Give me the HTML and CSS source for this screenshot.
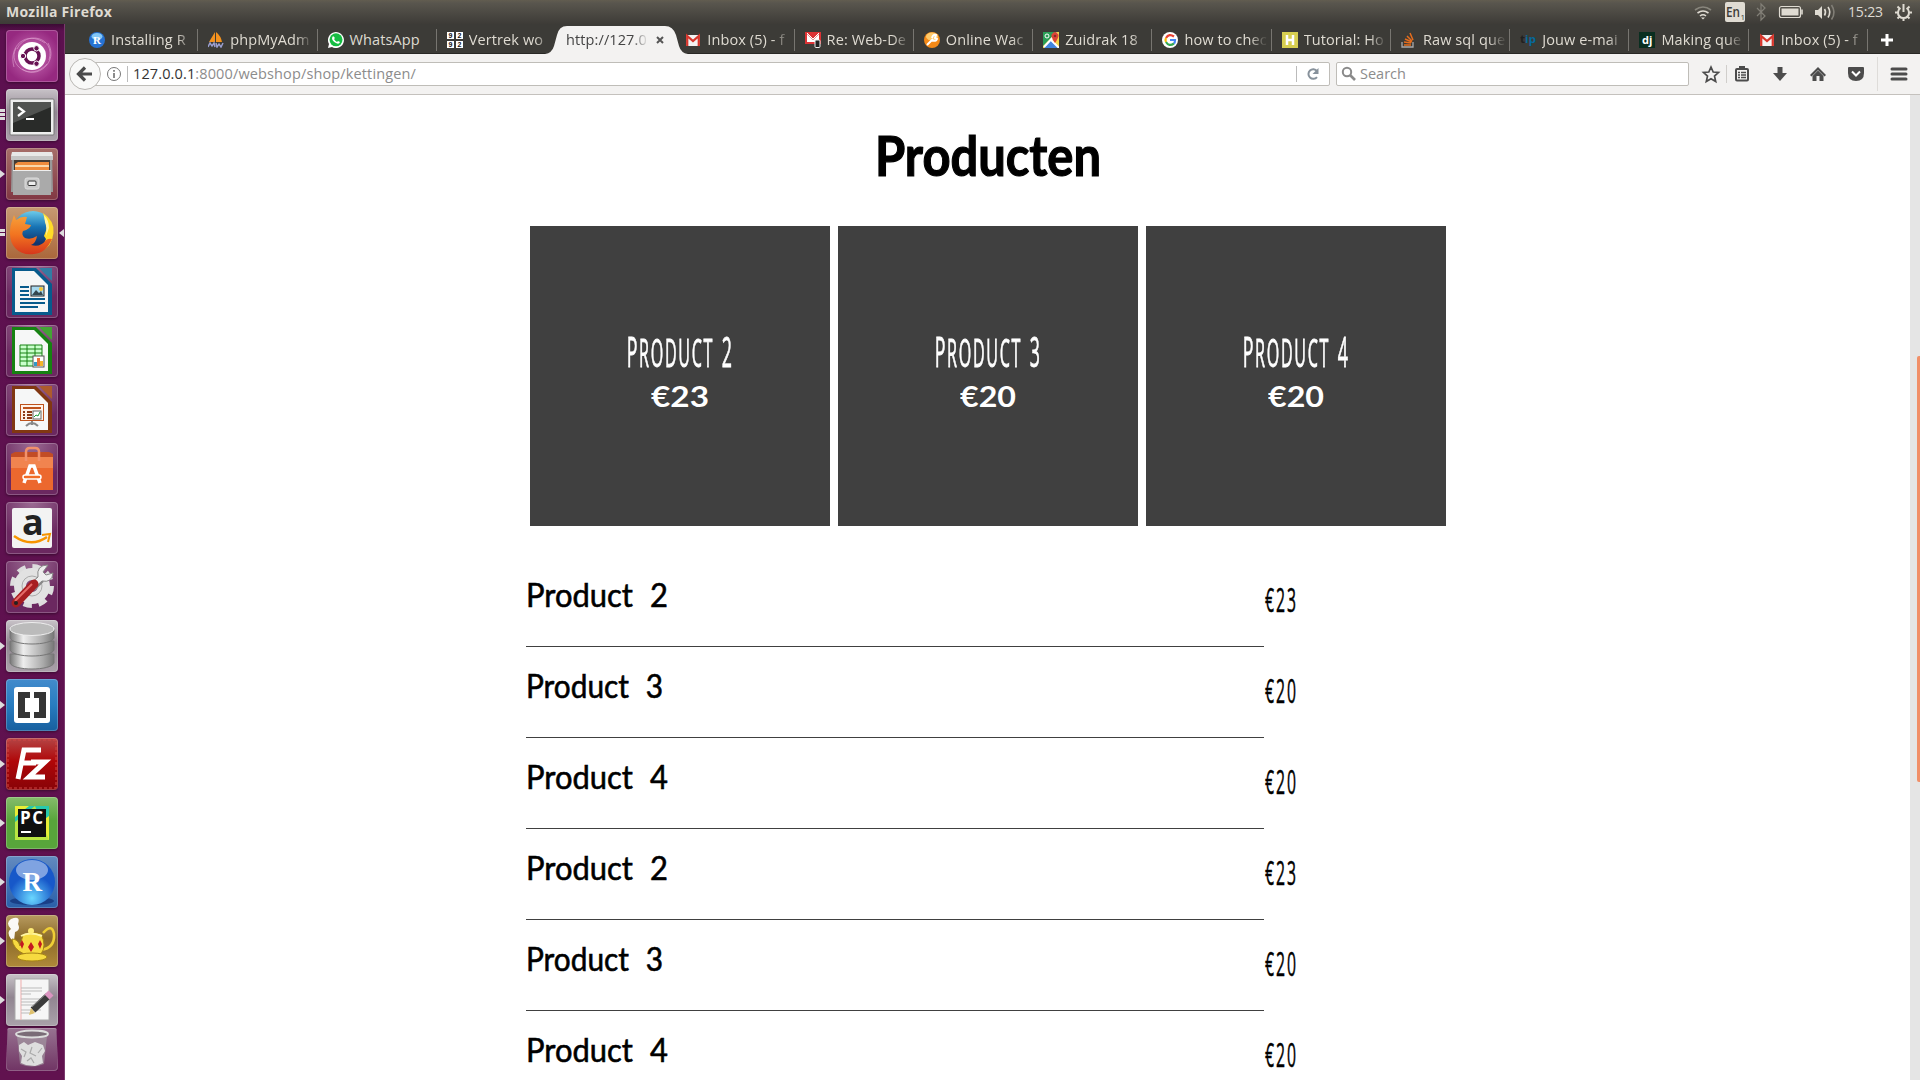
FILE: index.html
```html
<!DOCTYPE html>
<html lang="nl">
<head>
<meta charset="utf-8">
<title>Producten</title>
<link rel="stylesheet" href="styles.css">
</head>
<body>
<header class="panel">
  <span class="panel-title">Mozilla Firefox</span>
  <svg class="indicators" width="240" height="24" viewBox="1680 0 240 24" fill="none" stroke="#dfdbd2" stroke-width="1.6">
    <path d="M1695 10q8-6 16 0" stroke="#88857c"/><path d="M1697.500 13q5.500-4 11 0M1700 16q3-2.500 6 0"/><path d="M1701 17.500l2 2 2-2z" fill="#dfdbd2" stroke="none"/>
    <rect x="1725" y="2" width="20" height="20" rx="2" fill="#dfdbd2" stroke="none"/>
    <text x="1726" y="17" class="lang" textLength="14" lengthAdjust="spacingAndGlyphs">En</text><text x="1740.500" y="20" class="lang-sub">1</text>
    <path d="M1757 8l8 8-4 4V4l4 4-8 8" stroke="#827f77" stroke-width="1.200"/>
    <rect x="1779.500" y="6.500" width="21" height="11" rx="2" stroke-width="1.200"/><rect x="1781.500" y="8.500" width="17" height="7" fill="#dfdbd2" stroke="none"/><path d="M1802 9.500v5"/>
    <path d="M1815 10h3l4-4v13l-4-4h-3z" fill="#dfdbd2" stroke="none"/><path d="M1824.500 9q2 3 0 6.500M1828 7q3.500 5 0 10.500"/><path d="M1831.500 5q5 7.500 0 14.500" stroke="#827f77"/>
    <text x="1848" y="17" class="clock" textLength="35">15:23</text>
    <path d="M1900.500 8a5.500 5.500 0 1 0 6 0M1903.500 4v8M1903.500 18v3M1895 12.500h3M1909 12.500h3M1897.500 6.500l2 2M1909.500 6.500l-2 2M1897.500 18.500l2-2M1909.500 18.500l-2-2" stroke-width="2"/>
  </svg>
</header>
<div class="desktop">
  <nav class="launcher">
    <div class="tile ubuntu"><svg viewBox="0 0 52 52"><g fill="none" stroke="#e2a5d3" stroke-opacity=".6"><path d="M8 37C2 16 20 0 39 13M11 19C20 0 50 7 43 30M42 13C53 32 31 50 16 39M41 34C25 52 1 36 10 18"/></g><circle cx="26" cy="26" r="14" fill="#fff"/><circle cx="26" cy="26" r="7" fill="none" stroke="#671253" stroke-width="3.500"/><g fill="#671253" stroke="#fff" stroke-width="1"><circle cx="17" cy="26" r="2.700"/><circle cx="30.500" cy="18.300" r="2.700"/><circle cx="30.500" cy="33.700" r="2.700"/></g></svg></div>
    <div class="tile silver run many"><svg viewBox="0 0 52 52"><rect x="4" y="10" width="44" height="36" rx="1" fill="#eee" stroke="#777"/><rect x="7" y="13" width="38" height="30" fill="#292b29"/><path d="M7 13h38v5L7 34z" fill="#515351"/><path d="M12 18l6 4.500-6 4.500M20 30h8" fill="none" stroke="#fff" stroke-width="2.200"/></svg></div>
    <div class="tile files run"><svg viewBox="0 0 52 52"><path d="M6 4h40l1 40H5z" fill="#999"/><path d="M6 4h40l1 4H5z" fill="#e8e8e8"/><path d="M5 8h42v4H5z" fill="#c5c5c5"/><rect x="8" y="12" width="36" height="12" fill="#443b35"/><path d="M9 16l3-2h31v9H9z" fill="#f08b3c"/><path d="M9 18h34" stroke="#fff0d0" stroke-width="1.500"/><path d="M7 22h38v25H7z" fill="#aaa"/><path d="M7 22.500h38" stroke="#eee"/><rect x="19" y="30" width="14" height="11" rx="2" fill="#c9c9c9" stroke="#ddd"/><rect x="22" y="33" width="8" height="4.500" rx="1" fill="#eee" stroke="#333"/></svg></div>
    <div class="tile firefox run two focused"><svg viewBox="0 0 52 52"><defs><linearGradient id="globe" x2="0" y2="1"><stop stop-color="#6ccbea"/><stop offset=".4" stop-color="#1673b4"/><stop offset=".8" stop-color="#11356d"/></linearGradient><linearGradient id="fox" x2="0" y2="1"><stop stop-color="#f7a13a"/><stop offset=".5" stop-color="#f27420"/><stop offset="1" stop-color="#d6371c"/></linearGradient></defs><circle cx="27" cy="24" r="20" fill="url(#globe)"/><path d="M37 6q12 8 10.500 20Q46 40 35 44l5-12-2-3 3-8z" fill="#ffdc27"/><path d="M38 8q5 5 5 13l-3 8q1-9-1-14z" fill="#fff4a4"/><path d="M6 14l2-6 2 5q5-4 11-3l-2 7 6 1q-1 4-8 6-2 4 2 7 6 2 12-2-1 7-6 9 9 3 15-5 3-2 6-1-6 14-18 15C14 49 4 40 4 27Q4 18 6 14z" fill="url(#fox)"/></svg></div>
    <div class="tile office"><svg viewBox="0 0 52 52"><path d="M6 2h24l16 16v31H6z" fill="#075b8c"/><path d="M33 2h13v13z" fill="#327ca3"/><path d="M9 5h19l14 14v27H9z" fill="#f6f7f7"/><path d="M14 21h9M14 25h9M14 29h9M14 33h25M14 37h25M14 41h18" stroke="#075b8c" stroke-width="2"/><rect x="25" y="20" width="13" height="10" fill="#a8d9ee" stroke="#222"/><path d="M26 29l4-5 3 3 2-2 2 4z" fill="#33464f"/><circle cx="35" cy="23" r="2" fill="#f6c632"/></svg></div>
    <div class="tile office"><svg viewBox="0 0 52 52"><path d="M6 2h24l16 16v31H6z" fill="#168212"/><path d="M33 2h13v13z" fill="#43a334"/><path d="M9 5h19l14 14v27H9z" fill="#f6f7f7"/><path d="M14 20h22v21H14z" fill="#caffcc"/><path d="M14 20h22v21H14zM14 24h22M14 28h22M14 32h22M14 36h22M21 20v21M29 20v21" fill="none" stroke="#168212"/><rect x="27" y="31" width="11" height="11" fill="#fff" stroke="#555"/><path d="M28 37h3v4h-3z" fill="#3297c7"/><path d="M31 33h3v8h-3z" fill="#ed7138"/><path d="M34 36h3v5h-3z" fill="#f3b52a"/></svg></div>
    <div class="tile office"><svg viewBox="0 0 52 52"><path d="M6 2h24l16 16v31H6z" fill="#813712"/><path d="M33 2h13v13z" fill="#ad5b2d"/><path d="M9 5h19l14 14v27H9z" fill="#f6f7f7"/><rect x="14.500" y="20.500" width="23" height="16" fill="#fff2e9" stroke="#be521c"/><path d="M17 24h18" stroke="#be521c" stroke-width="2"/><path d="M17 28h2M17 31h2M17 34h2M21 28h5M21 31h5M21 34h5" stroke="#8d3a16" stroke-width="2"/><rect x="27" y="27" width="8" height="8" fill="#fff" stroke="#666"/><path d="M28 33l2-2 2 1 2-4" fill="none" stroke="#199b39"/><path d="M20 42q6-6 12 0M26 37v4" fill="none" stroke="#888" stroke-width="2"/></svg></div>
    <div class="tile office"><svg viewBox="0 0 52 52"><path d="M5 11h42v36H5z" fill="#ec682e"/><path d="M5 11l4-2h34l4 2v5H5z" fill="#c24c25"/><path d="M5 14h42v11H5z" fill="#f1844f"/><path d="M20 18V9q0-4 4-4h5q4 0 4 4v9" fill="none" stroke="#f1916c" stroke-width="2.500"/><path d="M18 40l6-17h4l6 17" fill="none" stroke="#fff" stroke-width="3.500"/><rect x="17" y="32" width="18" height="4" rx="2" fill="#f26c27" stroke="#fff" stroke-width="1.500"/></svg></div>
    <div class="tile office"><svg viewBox="0 0 52 52"><rect x="6" y="6" width="40" height="40" rx="2" fill="#f3f3f3"/><text x="16" y="33" class="amazon-a">a</text><path d="M8 34Q25 46 41 35" fill="none" stroke="#f79400" stroke-width="2.500"/><path d="M36 33l8-1-2 8" fill="none" stroke="#f79400" stroke-width="2"/></svg></div>
    <div class="tile office"><svg viewBox="0 0 52 52"><circle cx="26" cy="25" r="18.500" fill="none" stroke="#ddd" stroke-width="7" stroke-dasharray="8 6.500"/><circle cx="26" cy="25" r="12" fill="none" stroke="#e2e2e2" stroke-width="12"/><circle cx="26" cy="25" r="10" fill="none" stroke="#aaa"/><path d="M26 27l9-9" stroke="#888" stroke-width="8"/><path d="M27 28l9-8q10 2 11-8l-7 2-3-3 5-7q-12 0-10 12l-8 7z" fill="#eee" stroke="#888"/><path d="M10 42l18-19" stroke="#a71e21" stroke-width="9" stroke-linecap="round"/><path d="M9 40l17-17" stroke="#e66b68" stroke-width="2"/><circle cx="10" cy="42" r="2" fill="#222"/></svg></div>
    <div class="tile silver run"><svg viewBox="0 0 52 52"><defs><linearGradient id="steel"><stop stop-color="#777"/><stop offset=".3" stop-color="#eee"/><stop offset=".75" stop-color="#aaa"/><stop offset="1" stop-color="#777"/></linearGradient></defs><path d="M4 34v9c3 8 41 8 44 0v-9z" fill="url(#steel)" stroke="#777"/><path d="M4 21v9c3 8 41 8 44 0v-9z" fill="url(#steel)" stroke="#777"/><path d="M4 9v9c3 8 41 8 44 0V9z" fill="url(#steel)" stroke="#777"/><ellipse cx="26" cy="9" rx="22" ry="6.500" fill="#bbb" stroke="#eee"/></svg></div>
    <div class="tile blue run"><svg viewBox="0 0 52 52"><rect x="8" y="8" width="36" height="36" rx="3" fill="#fff"/><path d="M12 13h12v6h-5v14h5v6H12zM40 13H28v6h5v14h-5v6h12z" fill="#353535"/></svg></div>
    <div class="tile red run"><svg viewBox="0 0 52 52"><rect x="2" y="2" width="48" height="48" fill="none" stroke="#d14443" stroke-dasharray="3 2"/><path d="M12 41l6-29h17M15 25h15M25 24h14L23 39h16" fill="none" stroke="#fff" stroke-width="5"/></svg></div>
    <div class="tile green run"><svg viewBox="0 0 52 52"><path d="M9 9h34v34H9z" fill="#e9ee35"/><path d="M9 43V20L23 9h20v10z" fill="#27c9ad"/><path d="M9 43V25l20-16 14 34z" fill="#b9e642"/><rect x="12" y="12" width="28" height="28" fill="#101010"/><text x="14" y="27" class="pc-text" textLength="23">PC</text><path d="M15 35h10" stroke="#fff" stroke-width="2"/></svg></div>
    <div class="tile rstudio run"><svg viewBox="0 0 52 52"><defs><radialGradient id="orb" cy=".85"><stop stop-color="#6ad7ff"/><stop offset="1" stop-color="#1758c9"/></radialGradient></defs><ellipse cx="26" cy="45" rx="22" ry="4" fill="#193f87"/><circle cx="26" cy="26" r="23" fill="url(#orb)"/><ellipse cx="26" cy="14" rx="16" ry="10" fill="#fff" opacity=".45"/><text x="16.500" y="35" class="r-text">R</text></svg></div>
    <div class="tile gold run"><svg viewBox="0 0 52 52"><path d="M5 24Q0 17 5 14-1 8 5 4q10-4 7 5 3 6-3 8l-1 9z" fill="#fff" opacity=".95"/><path d="M37 18q9-10 11 1 1 14-13 16" fill="none" stroke="#efce35" stroke-width="2.500"/><path d="M6 24q6 0 8 7l3-11q8-4 18-1 6 12 0 20H18Q7 34 6 24z" fill="#f6da40" stroke="#a78515"/><ellipse cx="26" cy="42" rx="15" ry="4" fill="#f6da40" stroke="#a78515"/><path d="M15 21q9-5 21 0" stroke="#fff6a4" stroke-width="2" fill="none"/><circle cx="25" cy="16" r="3" fill="#ffed77"/><path d="M16 25l2 4-2 5-2-5zM25 27l3 5-3 5-3-5zM34 25l2 4-2 5-2-5z" fill="#c51921"/></svg></div>
    <div class="tile silver run"><svg viewBox="0 0 52 52"><rect x="9" y="5" width="34" height="41" fill="#f6f6f6" stroke="#aaa"/><path d="M15 5v41" stroke="#efadad"/><path d="M15 14h21M15 17h21M15 20h10M15 25h21M15 28h21M15 31h15M15 36h20M15 39h12" stroke="#bbb"/><path d="M27 36l15-14" stroke="#3b3b3b" stroke-width="7"/><path d="M26 33l15-14" stroke="#888"/><path d="M23 41l6-2-4-5z" fill="#dec06c"/><path d="M41 23l4-4" stroke="#da94c0" stroke-width="7"/></svg></div>
    <div class="tile trash"><svg viewBox="0 0 52 43"><path d="M11 8l3 28q12 5 24 0l3-28z" fill="#a49ba3" opacity=".65"/><path d="M13 17l5-3 4 3 7-3 8 3 2 6-3 5 1 7-8 3-9-1-5-2 1-7-3-5z" fill="#dedede"/><path d="M15 21l5 3-2 5M26 19l-2 6 6 3M36 20l-4 5M21 33l4-3 3 5" fill="none" stroke="#aaa" stroke-width="1.200"/><ellipse cx="26" cy="6" rx="16" ry="3.500" fill="#7a6c77" stroke="#ddd" stroke-width="1.800"/></svg></div>
  </nav>
  <section class="browser">
    <div class="tabs">
      <div class="tab"><svg class="fav" viewBox="0 0 16 16"><circle cx="8" cy="8" r="8" fill="#2672d2"/><ellipse cx="8" cy="4.500" rx="5.500" ry="3.500" fill="#83c7f6"/><text x="4" y="12" class="fav-serif">R</text></svg><span>Installing R</span></div>
      <div class="tab"><svg class="fav" viewBox="0 0 16 16"><path d="M1 10L7 0v10zM8 10V0q5 4 6 10z" fill="#f4921e"/><path d="M0 15l2-4 2 3 2-3 1 4m1-4l1 4 2-3 2 3 2-4" fill="none" stroke="#9b9fd0" stroke-width="1.500"/></svg><span>phpMyAdm</span></div>
      <div class="tab"><svg class="fav" viewBox="0 0 16 16"><path d="M0 16l1-4A8 8 0 1 1 4 15z" fill="#fff"/><circle cx="8" cy="7.800" r="6.500" fill="#16bd43"/><path d="M5 4l2 2-1 1q1 2 3 3l1-1 2 1q-1 3-4 1-4-2-4-5z" fill="#fff"/></svg><span class="whole">WhatsApp</span></div>
      <div class="tab"><svg class="fav" viewBox="0 0 16 16"><path d="M0 0h7v7H0zM9 0h7v7H9zM0 9h7v7H0zM9 9h7v7H9z" fill="#fff"/><g class="fav-digits"><text x="1.500" y="6">9</text><text x="10.500" y="6">2</text><text x="1.500" y="15">9</text><text x="10.500" y="15">2</text></g></svg><span>Vertrek wo</span></div>
      <div class="tab active"><svg class="active-shape" width="143" height="28" viewBox="0 0 143 28"><path d="M0 28q7-1 9-8l3-11Q14 0 22 0h98q8 0 11 9l3 11q2 7 9 8z" fill="#f3f2f1"/></svg><span>http://127.0</span><svg class="close" viewBox="0 0 8 8"><path d="M1 1l6 6M7 1L1 7" stroke="#555" stroke-width="2"/></svg></div>
      <div class="tab"><svg class="fav" viewBox="0 0 16 16"><path d="M1 3h14v11H1z" fill="#f3f3f3"/><path d="M2.200 14V4L8 9l5.800-5v10" fill="none" stroke="#d7362c" stroke-width="2.300"/></svg><span>Inbox (5) - f</span></div>
      <div class="tab"><svg class="fav" viewBox="0 0 16 16"><path d="M0 0h16v12H0z" fill="#dc3335"/><path d="M2 10V2l6 6 6-6v8" fill="#fff"/><path d="M2 1l6 6 6-6" fill="none" stroke="#fff"/><rect x="10" y="8" width="5" height="7.500" rx="1" fill="#222" stroke="#eee"/></svg><span>Re: Web-De</span></div>
      <div class="tab"><svg class="fav" viewBox="0 0 16 16"><circle cx="8" cy="8" r="8" fill="#f58a18"/><ellipse cx="8" cy="4.500" rx="6" ry="4" fill="#ffca6a"/><path d="M3 13l6-6m-1-1q1-4 4-3l-1 3 2 1q-1 3-5 1" fill="none" stroke="#fff" stroke-width="2"/></svg><span>Online Wac</span></div>
      <div class="tab"><svg class="fav" viewBox="0 0 16 16"><path d="M0 0h16v16H0z" fill="#2b9e57"/><path d="M0 14L14 0h2v16H0z" fill="#f4d348"/><path d="M8 8l8 8H1z" fill="#4285df"/><path d="M1 15L14 1M8 8l8 8" stroke="#fff" stroke-width="2"/><path d="M12 11Q7 4 9 2q3-4 6 0 2 2-3 9z" fill="#dc4437"/><circle cx="12" cy="4" r="1.300" fill="#852e28"/><circle cx="4" cy="4" r="2" fill="none" stroke="#fff"/></svg><span>Zuidrak 18</span></div>
      <div class="tab"><svg class="fav" viewBox="0 0 16 16"><circle cx="8" cy="8" r="8" fill="#fff"/><g fill="none" stroke-width="2.200"><path d="M12 4.500Q7 1 4 6" stroke="#ea4335"/><path d="M4 6q-1 2 0 4" stroke="#fbbc05"/><path d="M4 10q3 5 8 1.500" stroke="#34a853"/><path d="M12 11.500q1-1 1-3.500H8" stroke="#4285f4"/></g></svg><span>how to chec</span></div>
      <div class="tab"><svg class="fav" viewBox="0 0 16 16"><path d="M0 0h16v16H0z" fill="#d8cf50"/><path d="M5 3v10M11 3v10M5 8h6" stroke="#fff" stroke-width="2.500"/></svg><span>Tutorial: Ho</span></div>
      <div class="tab"><svg class="fav" viewBox="0 0 16 16"><path d="M1 10v5h11v-5" fill="none" stroke="#aaa" stroke-width="1.300"/><path d="M3 13h7M3 10l7 1M4 7l7 3M6 4l5 5M9 1l3 7" stroke="#e66d1d" stroke-width="1.500"/></svg><span>Raw sql que</span></div>
      <div class="tab"><svg class="fav" viewBox="0 0 16 16"><text x="0" y="11" class="tip" textLength="16" lengthAdjust="spacingAndGlyphs"><tspan fill="#202020">t</tspan><tspan fill="#07689b">ip</tspan></text></svg><span>Jouw e-mai</span></div>
      <div class="tab"><svg class="fav" viewBox="0 0 16 16"><path d="M0 0h16v16H0z" fill="#092e20"/><text x="3" y="12" class="dj">dj</text></svg><span>Making que</span></div>
      <div class="tab"><svg class="fav" viewBox="0 0 16 16"><path d="M1 3h14v11H1z" fill="#f3f3f3"/><path d="M2.200 14V4L8 9l5.800-5v10" fill="none" stroke="#d7362c" stroke-width="2.300"/></svg><span>Inbox (5) - f</span></div>
      <svg class="new-tab" viewBox="0 0 14 14"><path d="M7 1v12M1 7h12" stroke="#fff" stroke-width="3"/></svg>
    </div>
    <div class="toolbar">
      <svg class="back" viewBox="0 0 32 32"><circle cx="16" cy="16" r="15.500" fill="#f9f9f8" stroke="#b9b7b3"/><path d="M10 16h13M16 9.500L9.500 16l6.500 6.500" fill="none" stroke="#4b4b4b" stroke-width="3.200"/></svg>
      <div class="url">
        <svg class="info" viewBox="0 0 16 16"><circle cx="8" cy="8" r="6.500" fill="none" stroke="#777"/><path d="M8 7v5M8 4v1.700" stroke="#666" stroke-width="1.500"/></svg>
        <i class="rule"></i><span class="address"><b>127.0.0.1</b>:8000/webshop/shop/kettingen/</span>
        <i class="rule"></i><svg class="reload" viewBox="0 0 14 14"><path d="M11 10a4.800 4.800 0 1 1 0-6" fill="none" stroke="#87919b" stroke-width="2"/><path d="M12.500 1v6h-6z" fill="#87919b"/></svg>
      </div>
      <div class="search"><svg viewBox="0 0 16 16"><circle cx="6" cy="6" r="4.200" fill="none" stroke="#8a8a8a" stroke-width="2"/><path d="M9 9l5 5" stroke="#8a8a8a" stroke-width="2.600"/></svg><span>Search</span></div>
      <svg class="tools" width="231" height="40" viewBox="1689 54 231 40" fill="#4c4c4c">
        <path d="M1711 67l2.200 5 5.300.5-4 3.600 1.200 5.400-4.700-2.800-4.700 2.800 1.200-5.400-4-3.600 5.300-.5z" fill="none" stroke="#4c4c4c" stroke-width="1.700"/>
        <path d="M1726.500 65v18" stroke="#d0cecb"/><rect x="1736" y="69" width="12" height="11.500" rx="1" fill="none" stroke="#4c4c4c" stroke-width="2"/><path d="M1739 66h6v3h-6z"/><path d="M1738 72.500h2M1741 72.500h5M1738 75h2M1741 75h5M1738 77.500h2M1741 77.500h5" stroke="#4c4c4c" stroke-width="1.300"/>
        <path d="M1777.500 67h5v6h4.500l-7 8-7-8h4.500z"/><path d="M1810 75l8-8 8 8-1.500 1.500-6.500-6.500-6.500 6.500zM1812.500 76l5.500-5.500 5.500 5.500v5h-4v-5h-3v5h-4z"/>
        <path d="M1848 68q0-1 1-1h14q1 0 1 1v5q0 8-8 8t-8-8z"/><path d="M1852 71.500l4 4 4-4" fill="none" stroke="#fff" stroke-width="2"/><path d="M1877.500 57v34" stroke="#dedcd9"/><path d="M1892 69h14M1892 74h14M1892 79h14" stroke="#4c4c4c" stroke-width="3" stroke-linecap="round"/>
      </svg>
    </div>
    <div class="viewport">
      <main class="page">
        <h1><svg width="226" height="131"><text x="0" y="81" class="hand title" textLength="226" lengthAdjust="spacingAndGlyphs">Producten</text></svg></h1>
        <div class="cards">
          <article class="card"><p class="narrow">Product <b>2</b></p><svg width="58" height="44"><text x="0" y="35" class="hand price" textLength="58" lengthAdjust="spacingAndGlyphs">€23</text></svg></article>
          <article class="card"><p class="narrow">Product <b>3</b></p><svg width="56" height="44"><text x="0" y="35" class="hand price" textLength="56" lengthAdjust="spacingAndGlyphs">€20</text></svg></article>
          <article class="card"><p class="narrow">Product <b>4</b></p><svg width="56" height="44"><text x="0" y="35" class="hand price" textLength="56" lengthAdjust="spacingAndGlyphs">€20</text></svg></article>
        </div>
        <div class="list">
          <div class="row"><svg class="name"><text x="0" y="51" class="hand item" textLength="142" lengthAdjust="spacingAndGlyphs">Product 2</text></svg><svg class="cost"><text x="1" y="56" class="amount" textLength="33" lengthAdjust="spacingAndGlyphs">€23</text></svg></div>
          <div class="row"><svg class="name"><text x="0" y="51" class="hand item" textLength="137" lengthAdjust="spacingAndGlyphs">Product 3</text></svg><svg class="cost"><text x="1" y="56" class="amount" textLength="33" lengthAdjust="spacingAndGlyphs">€20</text></svg></div>
          <div class="row"><svg class="name"><text x="0" y="51" class="hand item" textLength="142" lengthAdjust="spacingAndGlyphs">Product 4</text></svg><svg class="cost"><text x="1" y="56" class="amount" textLength="33" lengthAdjust="spacingAndGlyphs">€20</text></svg></div>
          <div class="row"><svg class="name"><text x="0" y="51" class="hand item" textLength="142" lengthAdjust="spacingAndGlyphs">Product 2</text></svg><svg class="cost"><text x="1" y="56" class="amount" textLength="33" lengthAdjust="spacingAndGlyphs">€23</text></svg></div>
          <div class="row"><svg class="name"><text x="0" y="51" class="hand item" textLength="137" lengthAdjust="spacingAndGlyphs">Product 3</text></svg><svg class="cost"><text x="1" y="56" class="amount" textLength="33" lengthAdjust="spacingAndGlyphs">€20</text></svg></div>
          <div class="row"><svg class="name"><text x="0" y="51" class="hand item" textLength="142" lengthAdjust="spacingAndGlyphs">Product 4</text></svg><svg class="cost"><text x="1" y="56" class="amount" textLength="33" lengthAdjust="spacingAndGlyphs">€20</text></svg></div>
        </div>
      </main>
      <div class="scrollbar"><div class="thumb"></div></div>
    </div>
  </section>
</div>
</body>
</html>
```
FILE: styles.css
```css
* { box-sizing: border-box; }
body { margin: 0; width: 1920px; height: 1080px; overflow: hidden; background: #fff; font-family: "Open Sans", "Noto Sans", sans-serif; }
svg { display: block; flex: none; }

.panel { display: flex; justify-content: space-between; align-items: center; height: 24px; padding-left: 6px; background: linear-gradient(#625d50, #59564e 12%, #3d3b37); }
.panel-title { color: #dfdbd2; font-size: 14px; font-weight: 700; line-height: 22px; letter-spacing: .25px; }
.lang { font: 600 14px "Open Sans", sans-serif; fill: #3c3b37; stroke: none; }
.lang-sub { font: 8px "Open Sans", sans-serif; fill: #3c3b37; stroke: none; }
.clock { font: 14px "Open Sans", sans-serif; fill: #dfdbd2; stroke: none; }

.desktop { display: flex; height: 1056px; }
.launcher { display: flex; flex: none; flex-direction: column; gap: 7px; width: 65px; padding: 6px 0 0 6px; background: linear-gradient(#3b0b34, #5c104f 7px, #61124f); border-right: 1px solid #7a3a6d; }
.tile { position: relative; flex: none; width: 52px; height: 52px; border-radius: 4px; box-shadow: inset 0 0 0 1px rgba(255,255,255,.22), 0 1px 3px rgba(0,0,0,.4); background: #6b2c61; }
.tile svg { width: 52px; height: 52px; }
.ubuntu { background: radial-gradient(#cc70b8, #962980 75%); }
.silver { background: linear-gradient(#c8c3c8, #918591 45%, #aaa2aa); }
.files { background: linear-gradient(#a66e69, #813743); }
.firefox { background: linear-gradient(#c79a72, #aa673b); }
.office { background: radial-gradient(circle at 50% 0, #9b6b93, #6b2860 65%); }
.blue { background: linear-gradient(#438bcc, #287cc0 50%, #175f9e); }
.red { background: linear-gradient(#b44646, #b00608 45%, #870408); }
.green { background: linear-gradient(#86bc6c, #58a53b 45%); }
.rstudio { background: linear-gradient(#638bc0, #295fa9); }
.gold { background: linear-gradient(#b89b60, #8b6a29 45%, #af8939); }
.launcher .trash { height: 43px; margin-top: -5px; background: linear-gradient(#987391, #703464); clip-path: polygon(3% 0, 97% 0, 100% 100%, 0 100%); }
.trash svg { height: 43px; }
.run::before { content: ""; position: absolute; left: -6px; top: 22px; border: 4px solid transparent; border-left: 5px solid #ddd; border-right: 0; }
.many::before, .two::before { border: 0; width: 5px; height: 11px; top: 20px; background: repeating-linear-gradient(#ddd 0 3px, transparent 3px 4px); }
.two::before { height: 7px; top: 22px; }
.focused::after { content: ""; position: absolute; right: -6px; top: 22px; border: 4px solid transparent; border-right: 5px solid #ddd; border-left: 0; }
.amazon-a { font: 700 36px "Open Sans", sans-serif; fill: #222; }
.pc-text { font: 700 17px "Open Sans", sans-serif; fill: #fff; }
.r-text { font: 700 27px "Liberation Serif", serif; fill: #fff; }

.browser { width: 1855px; }
.tabs { display: flex; height: 30px; padding-left: 14px; background: #3c3b37; box-shadow: inset 0 -1px #292825; }
.tab { position: relative; display: flex; flex: none; align-items: center; gap: 6px; width: 119.270px; padding: 2px 7px 0 10px; color: #dfdbd2; font-size: 14.500px; line-height: 26px; letter-spacing: .1px; }
.tab:not(.active)::after { content: ""; position: absolute; right: 0; top: 5px; width: 1px; height: 22px; background: #777570; }
.tab:nth-child(4)::after { display: none; }
.tab span { flex: 1; white-space: nowrap; mask-image: linear-gradient(90deg, #000 66px, rgba(0,0,0,.15) 80px); }
.tab .whole { mask-image: none; }
.tab.active { color: #444; padding-right: 11px; z-index: 1; }
.active-shape { position: absolute; left: -11px; top: 2px; }
.active span { position: relative; }
.active .close { position: relative; width: 8px; height: 8px; }
.fav { width: 16px; height: 16px; }
.fav-serif { font: 700 11px "Liberation Serif", serif; fill: #fff; }
.fav-digits { font: 700 7px "Liberation Sans", sans-serif; fill: #111; }
.tip { font: 700 11px "Open Sans", sans-serif; }
.dj { font: 700 11px "Open Sans", sans-serif; fill: #fff; }
.new-tab { width: 14px; height: 14px; margin: 9px 0 0 12px; }

.toolbar { display: flex; align-items: center; height: 41px; padding-left: 4px; background: #f3f2f1; border-bottom: 1px solid #c4c1bd; }
.back { position: relative; z-index: 1; width: 32px; height: 32px; }
.url { display: flex; align-items: center; width: 1245px; height: 24px; margin-left: -16px; padding-left: 20px; background: #fff; border: 1px solid #bfbdb8; border-radius: 2px; }
.info { width: 16px; height: 16px; }
.rule { width: 1px; height: 16px; margin-left: 5px; background: #bbb; }
.address { flex: 1; margin-left: 5px; color: #8c8c8c; font-size: 14.500px; line-height: 22px; letter-spacing: .13px; }
.address b { color: #333; font-weight: 400; }
.reload { width: 14px; height: 14px; margin: 0 9px; }
.search { display: flex; align-items: center; gap: 3px; width: 353px; height: 24px; margin-left: 6px; padding-left: 4px; border: 1px solid #bfbdb8; border-radius: 2px; background: #fff; color: #8c8c8c; font-size: 14.500px; line-height: 22px; }
.search svg { width: 16px; height: 16px; }

.viewport { display: flex; height: 985px; overflow: hidden; }
.page { width: 1845px; padding-left: 461px; }
h1 { display: flex; justify-content: center; width: 924px; height: 131px; margin: 0; }
.cards { display: flex; gap: 8px; padding-left: 4px; }
.card { display: flex; flex-direction: column; align-items: center; width: 300px; height: 300px; padding-top: 104px; background: #404040; color: #fff; }
.card text { fill: #fff; }
.narrow { width: max-content; height: 42px; margin: 0; font-size: 38px; line-height: 42px; text-transform: uppercase; white-space: nowrap; letter-spacing: 4px; word-spacing: 4px; transform: scaleX(.424); -webkit-text-stroke: .8px; }
.narrow::first-letter, .narrow b { font-size: 42px; font-weight: 400; }
.list { padding-top: 30px; }
.row { display: flex; height: 91px; }
.name { width: 738px; height: 91px; border-bottom: 1px solid #404040; }
.cost { width: 186px; height: 91px; }
.hand { font-family: "Lato", "Open Sans", sans-serif; fill: #000; stroke: #000; }
.title { font-size: 56px; stroke-width: 1.200px; }
.item { font-size: 33px; stroke-width: .6px; word-spacing: 10px; }
.price { font-size: 29px; font-weight: 700; stroke: none; }
.amount { font-size: 32px; letter-spacing: 4px; fill: #000; stroke: #000; stroke-width: .5px; }
.scrollbar { width: 10px; height: 985px; padding: 261px 0 0 7px; background: #e5e5e5; }
.thumb { width: 3px; height: 426px; background: #f18f68; border-radius: 2px 0 0 2px; }
```
